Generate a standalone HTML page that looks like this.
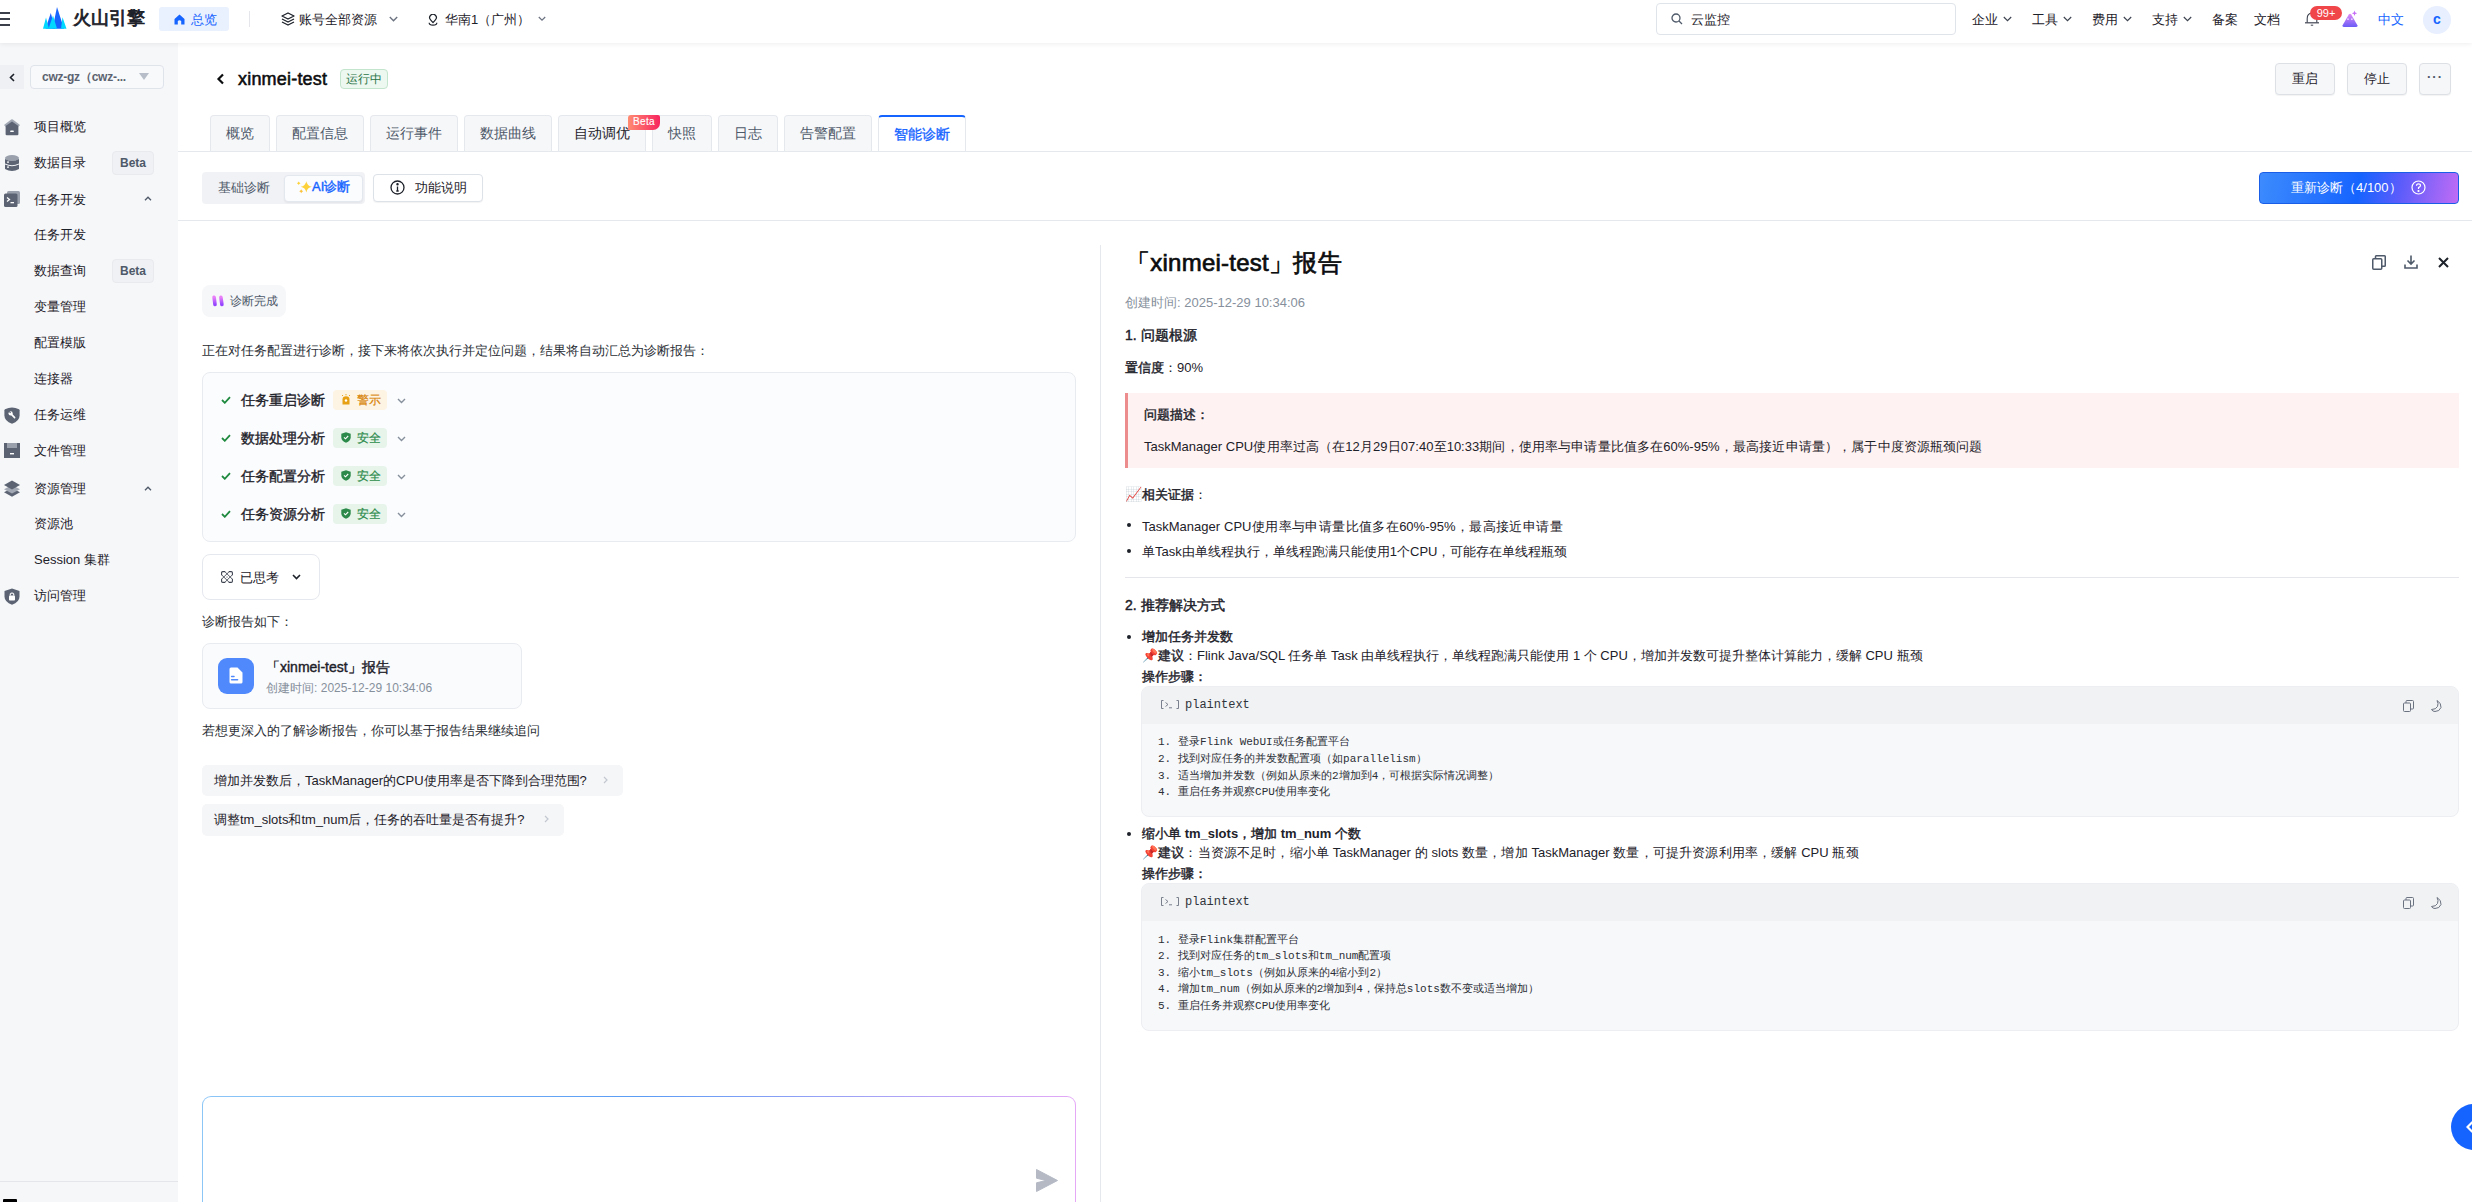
<!DOCTYPE html>
<html><head><meta charset="utf-8">
<style>
*{box-sizing:border-box;margin:0;padding:0}
html,body{width:2472px;height:1202px;overflow:hidden;background:#fff}
body{position:relative;font-family:"Liberation Sans",sans-serif;font-size:13px;color:#1d2129}
.a{position:absolute;white-space:nowrap}
svg{display:block}
/* top nav */
#nav{left:0;top:0;width:2472px;height:43px;background:#fff;box-shadow:0 1px 5px rgba(0,0,0,.07);z-index:5}
.nt{font-size:13px;line-height:20px;color:#1d2129;top:10px}
/* sidebar */
#side{left:0;top:43px;width:178px;height:1159px;background:#f6f7f9}
.si{font-size:13px;line-height:20px;color:#1d2129;left:34px;margin-top:1px}
.beta{background:#f0f1f4;border:1px solid #e8eaee;border-radius:4px;color:#4e5969;font-size:12px;font-weight:bold;text-align:center;line-height:22px;height:24px;width:42px;left:112px}
/* tabs */
.tab{top:115px;height:36px;background:#f6f7f9;border:1px solid #e5e8ed;border-bottom:none;border-radius:4px 4px 0 0;font-size:14px;line-height:35px;color:#4e5969;text-align:center}
.btn{background:#f6f7f9;border:1px solid #dde1e6;border-radius:4px;box-shadow:0 1px 1px rgba(0,0,0,.05);font-size:13px;text-align:center;color:#1d2129}
</style></head><body>

<!-- ========== TOP NAV ========== -->
<div id="nav" class="a">
  <!-- hamburger -->
  <div class="a" style="left:0;top:12px;width:10px;height:2px;background:#3a3f4a"></div>
  <div class="a" style="left:0;top:18px;width:10px;height:2px;background:#3a3f4a"></div>
  <div class="a" style="left:0;top:24px;width:10px;height:2px;background:#3a3f4a"></div>
  <!-- logo -->
  <svg class="a" style="left:43px;top:7px" width="24" height="22" viewBox="0 0 24 22">
    <polygon points="9.5,21.7 14,0 21,21.7" fill="#1664ff"/>
    <polygon points="2.5,21.7 7.8,6 12,21.7" fill="#1664ff"/>
    <polygon points="0,21.7 3,10.5 6,21.7" fill="#00d8ff"/>
    <polygon points="5.5,21.7 10,8.5 14,21.7" fill="#00d8ff"/>
    <polygon points="18,21.7 19.5,10.3 23.5,21.7" fill="#00d8ff"/>
  </svg>
  <div class="a" style="left:73px;top:6px;font-size:17.5px;line-height:24px;font-weight:normal;-webkit-text-stroke-width:0.85px;color:#1d2129;width:72.0px;text-align:justify;text-align-last:justify">火山引擎</div>
  <!-- 总览 pill -->
  <div class="a" style="left:159px;top:7px;width:70px;height:24px;background:#eaf1fe;border-radius:3px"></div>
  <svg class="a" style="left:174px;top:14px" width="11" height="11" viewBox="0 0 11 11"><path d="M0.5 5 L5.5 0.5 L10.5 5 L10.5 10.5 L7.2 10.5 L7.2 7 Q5.5 5.5 3.8 7 L3.8 10.5 L0.5 10.5 Z" fill="#1664ff"/></svg>
  <div class="a nt" style="left:191px;color:#1664ff;width:26.1px;text-align:justify;text-align-last:justify">总览</div>
  <div class="a" style="left:249px;top:11px;width:1px;height:16px;background:#e5e6eb"></div>
  <!-- account resource -->
  <svg class="a" style="left:281px;top:12px" width="14" height="14" viewBox="0 0 14 14" fill="none" stroke="#1d2129" stroke-width="1.3" stroke-linejoin="round"><path d="M7 1 L13 4 L7 7 L1 4 Z"/><path d="M1 7 L7 10 L13 7"/><path d="M1 10 L7 13 L13 10"/></svg>
  <div class="a nt" style="left:299px;width:78.0px;text-align:justify;text-align-last:justify">账号全部资源</div>
  <svg class="a" style="left:389px;top:16px" width="9" height="6" viewBox="0 0 9 6"><path d="M0.8 1 L4.5 4.7 L8.2 1" fill="none" stroke="#6b7280" stroke-width="1.4"/></svg>
  <svg class="a" style="left:428px;top:14px" width="10" height="12" viewBox="0 0 10 12" fill="none" stroke="#1d2129" stroke-width="1.2" stroke-linejoin="round"><path d="M5 8.6 L2.6 5.9 A3.3 3.3 0 1 1 7.4 5.9 Z"/><path d="M1.2 8.8 Q1 11.2 5 11.2 Q9 11.2 8.8 8.8"/></svg>
  <div class="a nt" style="left:445px;width:85.3px;text-align:justify;text-align-last:justify">华南1（广州）</div>
  <svg class="a" style="left:538px;top:16px" width="8" height="6" viewBox="0 0 8 6"><path d="M0.8 1 L4 4.2 L7.2 1" fill="none" stroke="#6b7280" stroke-width="1.2"/></svg>

  <!-- search -->
  <div class="a" style="left:1656px;top:3px;width:300px;height:32px;border:1px solid #dfe3ea;border-radius:4px;background:#fff"></div>
  <svg class="a" style="left:1671px;top:13px" width="12" height="12" viewBox="0 0 12 12" fill="none" stroke="#4e5969" stroke-width="1.3"><circle cx="5" cy="5" r="4"/><path d="M8 8 L11 11"/></svg>
  <div class="a nt" style="left:1691px;width:39.0px;text-align:justify;text-align-last:justify">云监控</div>
  <div class="a nt" style="left:1972px;width:26.1px;text-align:justify;text-align-last:justify">企业</div>
  <svg class="a" style="left:2003px;top:16px" width="9" height="6" viewBox="0 0 9 6"><path d="M0.8 1 L4.5 4.7 L8.2 1" fill="none" stroke="#3d4350" stroke-width="1.15"/></svg>
  <div class="a nt" style="left:2032px;width:26.1px;text-align:justify;text-align-last:justify">工具</div>
  <svg class="a" style="left:2063px;top:16px" width="9" height="6" viewBox="0 0 9 6"><path d="M0.8 1 L4.5 4.7 L8.2 1" fill="none" stroke="#3d4350" stroke-width="1.15"/></svg>
  <div class="a nt" style="left:2092px;width:26.1px;text-align:justify;text-align-last:justify">费用</div>
  <svg class="a" style="left:2123px;top:16px" width="9" height="6" viewBox="0 0 9 6"><path d="M0.8 1 L4.5 4.7 L8.2 1" fill="none" stroke="#3d4350" stroke-width="1.15"/></svg>
  <div class="a nt" style="left:2152px;width:26.1px;text-align:justify;text-align-last:justify">支持</div>
  <svg class="a" style="left:2183px;top:16px" width="9" height="6" viewBox="0 0 9 6"><path d="M0.8 1 L4.5 4.7 L8.2 1" fill="none" stroke="#3d4350" stroke-width="1.15"/></svg>
  <div class="a nt" style="left:2212px;width:26.1px;text-align:justify;text-align-last:justify">备案</div>
  <div class="a nt" style="left:2254px;width:26.1px;text-align:justify;text-align-last:justify">文档</div>
  <!-- bell -->
  <svg class="a" style="left:2304px;top:12px" width="16" height="15" viewBox="0 0 16 15" fill="none" stroke="#3d4350" stroke-width="1.1"><path d="M3.2 10.5 L3.2 6.5 Q3.2 1.3 8 1.3 Q12.8 1.3 12.8 6.5 L12.8 10.5"/><path d="M1 10.8 L15 10.8" stroke-width="1.2"/><path d="M6.8 13.2 L9.2 13.2" stroke-width="1"/></svg>
  <div class="a" style="left:2310px;top:6px;width:32px;height:14px;border-radius:7px;background:#f0464a;color:#fff;font-size:11px;line-height:14px;text-align:center">99+</div>
  <svg class="a" style="left:2341px;top:10px" width="18" height="18" viewBox="0 0 18 18"><defs><linearGradient id="pm" x1="0" y1="0" x2="0" y2="1"><stop offset="0" stop-color="#e08af8"/><stop offset="1" stop-color="#6a5cf6"/></linearGradient></defs><path d="M1.6 15.2 L7.8 4.6 Q9 2.8 10.2 4.6 L16.4 15.2 Q17 17 15.2 17 L2.8 17 Q1 17 1.6 15.2 Z" fill="url(#pm)"/><rect x="6.3" y="8.3" width="1.4" height="1.8" rx="0.6" fill="#fff" opacity="0.85"/><rect x="10.2" y="8.3" width="1.4" height="1.8" rx="0.6" fill="#fff" opacity="0.85"/><path d="M13.5 0.5 L14.2 2.5 L16.2 3.2 L14.2 3.9 L13.5 5.9 L12.8 3.9 L10.8 3.2 L12.8 2.5 Z" fill="#c46cf5"/></svg>
  <div class="a nt" style="left:2378px;color:#1664ff;width:26.1px;text-align:justify;text-align-last:justify">中文</div>
  <div class="a" style="left:2423px;top:6px;width:28px;height:28px;border-radius:50%;background:#e8effe;color:#1664ff;font-weight:bold;font-size:14px;line-height:27px;text-align:center">c</div>
</div>

<!-- ========== SIDEBAR ========== -->
<div id="side" class="a">
  <div class="a" style="left:0;top:22px;width:24px;height:24px;background:#eef0f3"></div>
  <svg class="a" style="left:9px;top:30px" width="6" height="9" viewBox="0 0 6 9"><path d="M5 1 L1.5 4.5 L5 8" fill="none" stroke="#1d2129" stroke-width="1.6"/></svg>
  <div class="a" style="left:30px;top:22px;width:134px;height:24px;border:1px solid #dfe3ea;border-radius:4px;background:#f8f9fb"></div>
  <div class="a" style="left:42px;top:24px;font-size:12px;line-height:20px;font-weight:bold;color:#5c6370;letter-spacing:-0.25px;width:83.9px;text-align:justify;text-align-last:justify">cwz-gz（cwz-...</div>
  <svg class="a" style="left:139px;top:30px" width="10" height="8" viewBox="0 0 10 8"><path d="M0 0 L10 0 L5 7 Z" fill="#b8bec9"/></svg>

  <!-- icons -->
  <svg class="a" style="left:4px;top:76px" width="16" height="17" viewBox="0 0 16 17"><path d="M0.3 6.6 Q0 6 0.6 5.5 L7.2 0.6 Q8 0 8.8 0.6 L15.4 5.5 Q16 6 15.7 6.6 L14.5 7.6 L1.5 7.6 Z" fill="#a3a9b4"/><path d="M1.6 7 L8 2.6 L14.4 7 L14.4 15.2 Q14.4 16.3 13.3 16.3 L2.7 16.3 Q1.6 16.3 1.6 15.2 Z" fill="#5c6474"/><rect x="6.2" y="11.6" width="3.6" height="1.4" rx="0.6" fill="#fff"/></svg>
  <div class="a si" style="top:73px;width:52.0px;text-align:justify;text-align-last:justify">项目概览</div>
  <svg class="a" style="left:5px;top:112px" width="14" height="17" viewBox="0 0 14 17"><ellipse cx="7" cy="3" rx="7" ry="3" fill="#9aa1ad"/><path d="M0 4 Q7 8 14 4 L14 8.5 Q7 12 0 8.5 Z" fill="#5c6474"/><path d="M0 9.5 Q7 13 14 9.5 L14 14 Q7 18 0 14 Z" fill="#5c6474"/><rect x="2" y="6.5" width="2" height="1.2" fill="#fff"/><rect x="2" y="11.5" width="2" height="1.2" fill="#fff"/></svg>
  <div class="a si" style="top:109px;width:52.0px;text-align:justify;text-align-last:justify">数据目录</div>
  <div class="a beta" style="top:108px">Beta</div>
  <svg class="a" style="left:4px;top:148px" width="16" height="16" viewBox="0 0 16 16"><rect x="3" y="0" width="13" height="13" rx="1.5" fill="#9aa1ad"/><rect x="0" y="2.5" width="13.5" height="13.5" rx="1.5" fill="#5c6474"/><path d="M3 6.5 L5.5 8.5 L3 10.5" fill="none" stroke="#fff" stroke-width="1.3"/><rect x="6.5" y="11" width="3.5" height="1.3" fill="#fff"/></svg>
  <div class="a si" style="top:146px;width:52.0px;text-align:justify;text-align-last:justify">任务开发</div>
  <svg class="a" style="left:144px;top:153px" width="8" height="5" viewBox="0 0 8 5"><path d="M1 4.2 L4 1.2 L7 4.2" fill="none" stroke="#4e5969" stroke-width="1.3"/></svg>
  <div class="a si" style="top:181px;width:52.0px;text-align:justify;text-align-last:justify">任务开发</div>
  <div class="a si" style="top:217px;width:52.0px;text-align:justify;text-align-last:justify">数据查询</div>
  <div class="a beta" style="top:216px">Beta</div>
  <div class="a si" style="top:253px;width:52.0px;text-align:justify;text-align-last:justify">变量管理</div>
  <div class="a si" style="top:289px;width:52.0px;text-align:justify;text-align-last:justify">配置模版</div>
  <div class="a si" style="top:325px;width:39.0px;text-align:justify;text-align-last:justify">连接器</div>
  <svg class="a" style="left:4px;top:364px" width="16" height="17" viewBox="0 0 16 17"><path d="M8 0.5 Q11.5 0.8 15 2.3 Q15.6 2.6 15.6 3.3 L15.6 8.5 Q15.6 14 8 16.8 Q0.4 14 0.4 8.5 L0.4 3.3 Q0.4 2.6 1 2.3 Q4.5 0.8 8 0.5 Z" fill="#5c6474"/><circle cx="6.6" cy="6.4" r="2.1" fill="#fff"/><path d="M6.8 6.6 L10.6 10.6" stroke="#fff" stroke-width="1.6" stroke-linecap="round"/><path d="M5.2 4.3 L6.6 5.8" stroke="#5c6474" stroke-width="1.2"/></svg>
  <div class="a si" style="top:361px;width:52.0px;text-align:justify;text-align-last:justify">任务运维</div>
  <svg class="a" style="left:4px;top:400px" width="16" height="15" viewBox="0 0 16 15"><path d="M0 0 L16 0 L16 15 L0 15 Z" fill="#5c6474"/><rect x="3" y="0" width="10" height="5" fill="#9aa1ad"/><rect x="6" y="10" width="4" height="1.4" fill="#fff"/></svg>
  <div class="a si" style="top:397px;width:52.0px;text-align:justify;text-align-last:justify">文件管理</div>
  <svg class="a" style="left:4px;top:437px" width="16" height="17" viewBox="0 0 16 17"><path d="M0 12.3 L8 8 L16 12.3 L8 16.8 Z" fill="#5c6474"/><path d="M0 9.3 L8 5 L16 9.3 L8 13.6 Z" fill="#a3a9b4"/><path d="M0 5 L8 0.5 L16 5 L8 9.5 Z" fill="#5c6474"/></svg>
  <div class="a si" style="top:435px;width:52.0px;text-align:justify;text-align-last:justify">资源管理</div>
  <svg class="a" style="left:144px;top:443px" width="8" height="5" viewBox="0 0 8 5"><path d="M1 4.2 L4 1.2 L7 4.2" fill="none" stroke="#4e5969" stroke-width="1.3"/></svg>
  <div class="a si" style="top:470px;width:39.0px;text-align:justify;text-align-last:justify">资源池</div>
  <div class="a si" style="top:506px;width:75.9px;text-align:justify;text-align-last:justify">Session 集群</div>
  <svg class="a" style="left:4px;top:545px" width="16" height="17" viewBox="0 0 16 17"><path d="M8 0.5 L15.5 3 L15.5 8.5 Q15.5 14 8 16.8 Q0.5 14 0.5 8.5 L0.5 3 Z" fill="#5c6474"/><rect x="5" y="7.5" width="6" height="5" rx="0.8" fill="#fff"/><path d="M6.3 7.5 L6.3 6 Q8 4 9.7 6 L9.7 7.5" fill="none" stroke="#fff" stroke-width="1.1"/></svg>
  <div class="a si" style="top:542px;width:52.0px;text-align:justify;text-align-last:justify">访问管理</div>
  <div class="a" style="left:0;top:1138px;width:178px;height:1px;background:#e5e6eb"></div>
  <div class="a" style="left:3px;top:1156px;width:14px;height:6px;background:#000;border-radius:1px"></div>
</div>

<!-- ========== MAIN ========== -->
<div id="main">
  <!-- header -->
  <svg class="a" style="left:216px;top:73px" width="9" height="12" viewBox="0 0 9 12"><path d="M7 1.5 L2.5 6 L7 10.5" fill="none" stroke="#0c0d0e" stroke-width="2.2"/></svg>
  <div class="a" style="left:238px;top:68px;font-size:18px;line-height:22px;font-weight:normal;-webkit-text-stroke-width:0.55px;letter-spacing:0.2px;color:#0c0d0e;width:89.3px;text-align:justify;text-align-last:justify">xinmei-test</div>
  <div class="a" style="left:340px;top:69px;width:48px;height:20px;background:#edf8f0;border:1px solid #c3e5cd;border-radius:4px;color:#2a7447;font-size:12px;line-height:18px;text-align:center;padding-left:4.95px;padding-right:4.95px;text-align:justify;text-align-last:justify">运行中</div>
  <div class="a btn" style="left:2275px;top:63px;width:60px;height:32px;line-height:30px;padding-left:15.95px;padding-right:15.95px;text-align:justify;text-align-last:justify">重启</div>
  <div class="a btn" style="left:2347px;top:63px;width:60px;height:32px;line-height:30px;padding-left:15.95px;padding-right:15.95px;text-align:justify;text-align-last:justify">停止</div>
  <div class="a btn" style="left:2419px;top:63px;width:32px;height:32px;line-height:26px;letter-spacing:1px;font-weight:bold;color:#4e5969">···</div>

  <!-- tabs -->
  <div class="a" style="left:178px;top:151px;width:2294px;height:1px;background:#e5e8ed"></div>
  <div class="a tab" style="left:210px;width:60px;padding-left:14.95px;padding-right:14.95px;text-align:justify;text-align-last:justify">概览</div>
  <div class="a tab" style="left:276px;width:88px;padding-left:14.95px;padding-right:14.95px;text-align:justify;text-align-last:justify">配置信息</div>
  <div class="a tab" style="left:370px;width:88px;padding-left:14.95px;padding-right:14.95px;text-align:justify;text-align-last:justify">运行事件</div>
  <div class="a tab" style="left:464px;width:88px;padding-left:14.95px;padding-right:14.95px;text-align:justify;text-align-last:justify">数据曲线</div>
  <div class="a tab" style="left:558px;width:88px;color:#1d2129;padding-left:14.95px;padding-right:14.95px;text-align:justify;text-align-last:justify">自动调优</div>
  <div class="a" style="z-index:2;left:628px;top:115px;width:32px;height:15px;border-radius:3px 2px 7px 0;background:linear-gradient(90deg,#ff8c72,#f7245e);color:#fff;font-size:10px;line-height:14px;letter-spacing:0.4px;text-align:center;-webkit-text-stroke-width:0.15px">Beta</div>
  <div class="a tab" style="left:652px;width:60px;padding-left:14.95px;padding-right:14.95px;text-align:justify;text-align-last:justify">快照</div>
  <div class="a tab" style="left:718px;width:60px;padding-left:14.95px;padding-right:14.95px;text-align:justify;text-align-last:justify">日志</div>
  <div class="a tab" style="left:784px;width:88px;padding-left:14.95px;padding-right:14.95px;text-align:justify;text-align-last:justify">告警配置</div>
  <div class="a tab" style="left:878px;width:88px;background:#fff;border-color:#e5e8ed;color:#1664ff;border-top:2px solid #1664ff;line-height:34px;height:36px;-webkit-text-stroke-width:0.3px;padding-left:14.95px;padding-right:14.95px;text-align:justify;text-align-last:justify">智能诊断</div>

  <!-- toolbar -->
  <div class="a" style="left:202px;top:172px;width:163px;height:32px;background:#f1f2f5;border-radius:4px"></div>
  <div class="a" style="left:218px;top:178px;font-size:13px;line-height:20px;color:#4e5969;width:52.0px;text-align:justify;text-align-last:justify">基础诊断</div>
  <div class="a" style="left:284px;top:175px;width:79px;height:27px;background:#fbfcfe;border:1px solid #e3e7ee;border-radius:4px;box-shadow:0 1px 2px rgba(0,0,0,.06)"></div>
  <svg class="a" style="left:295px;top:179px" width="18" height="16" viewBox="0 0 18 16"><path d="M11.3 2.2 Q12.200000000000001 6.8999999999999995 16.9 7.8 Q12.200000000000001 8.7 11.3 13.399999999999999 Q10.4 8.7 5.700000000000001 7.8 Q10.4 6.8999999999999995 11.3 2.2Z" fill="#fcd13a"/><path d="M3.7 2.5 Q4.15 3.8499999999999996 5.5 4.3 Q4.15 4.75 3.7 6.1 Q3.25 4.75 1.9000000000000001 4.3 Q3.25 3.8499999999999996 3.7 2.5Z" fill="#fcd13a"/><path d="M6.2 10.3 Q6.7 11.8 8.2 12.3 Q6.7 12.8 6.2 14.3 Q5.7 12.8 4.2 12.3 Q5.7 11.8 6.2 10.3Z" fill="#fcc23a"/></svg>
  <div class="a" style="left:312px;top:177px;font-size:13px;line-height:20px;color:#1664ff;font-weight:normal;-webkit-text-stroke-width:0.4px;width:38.3px;text-align:justify;text-align-last:justify">AI诊断</div>
  <div class="a" style="left:373px;top:174px;width:110px;height:28px;background:#fff;border:1px solid #dde2e9;border-radius:4px;box-shadow:0 1px 1px rgba(0,0,0,.05)"></div>
  <svg class="a" style="left:390px;top:180px" width="15" height="15" viewBox="0 0 15 15" fill="none" stroke="#1d2129" stroke-width="1.3"><circle cx="7.5" cy="7.5" r="6.5"/><path d="M7.5 6.5 L7.5 11 M6.3 11 L8.7 11"/><circle cx="7.5" cy="4.2" r="0.6" fill="#1d2129"/></svg>
  <div class="a" style="left:415px;top:178px;font-size:13px;line-height:20px;color:#1d2129;width:52.0px;text-align:justify;text-align-last:justify">功能说明</div>

  <div class="a" style="left:2259px;top:172px;width:200px;height:32px;border-radius:4px;background:linear-gradient(100deg,#3d8bfd 0%,#1664ff 50%,#5a5cfb 70%,#c06cf5 100%);border:1px solid #1a5ee8"></div>
  <div class="a" style="left:2291px;top:178px;font-size:13px;line-height:20px;color:#fff;width:110.6px;text-align:justify;text-align-last:justify">重新诊断（4/100）</div>
  <svg class="a" style="left:2411px;top:180px" width="15" height="15" viewBox="0 0 15 15" fill="none" stroke="#fff" stroke-width="1.2"><circle cx="7.5" cy="7.5" r="6.5"/><path d="M5.5 5.8 Q5.5 3.8 7.5 3.8 Q9.5 3.8 9.5 5.6 Q9.5 6.8 7.5 7.6 L7.5 9"/><circle cx="7.5" cy="11" r="0.5" fill="#fff"/></svg>
  <div class="a" style="left:178px;top:220px;width:2294px;height:1px;background:#e5e8ed"></div>
</div>

<!-- ========== CHAT ========== -->
<div id="chat">
  <div class="a" style="left:1100px;top:245px;width:1px;height:957px;background:#e5e8ed"></div>
  <div class="a" style="left:202px;top:285px;width:84px;height:32px;border-radius:8px;background:#f6f7f9"></div>
  <svg class="a" style="left:210px;top:294px" width="14" height="14" viewBox="0 0 14 14"><defs><linearGradient id="pg" x1="0" y1="0" x2="0" y2="1"><stop offset="0" stop-color="#ea80f8"/><stop offset="1" stop-color="#9446ff"/></linearGradient></defs><path d="M4.1 3.3 L5 10.4" stroke="url(#pg)" stroke-width="3.6" stroke-linecap="round"/><path d="M10.9 3.3 L11.9 10.4" stroke="url(#pg)" stroke-width="3.6" stroke-linecap="round"/></svg>
  <div class="a" style="left:230px;top:291px;font-size:12px;line-height:20px;color:#4e5969;width:48.0px;text-align:justify;text-align-last:justify">诊断完成</div>
  <div class="a" style="left:202px;top:341px;font-size:13px;line-height:20px;color:#2b2f36;width:507.1px;text-align:justify;text-align-last:justify">正在对任务配置进行诊断，接下来将依次执行并定位问题，结果将自动汇总为诊断报告：</div>
  <div class="a" style="left:202px;top:372px;width:874px;height:170px;border:1px solid #e8ebf0;border-radius:8px;background:#fbfcfe"></div>
  <svg class="a" style="left:221px;top:396px" width="10" height="8" viewBox="0 0 10 8"><path d="M1 4 L3.8 6.8 L9 1.2" fill="none" stroke="#1f8a3f" stroke-width="1.8"/></svg>
  <div class="a" style="left:241px;top:390px;font-size:14px;line-height:20px;font-weight:normal;-webkit-text-stroke:0.35px #1d2129;color:#1d2129;width:84.0px;text-align:justify;text-align-last:justify">任务重启诊断</div>
  <div class="a" style="left:333px;top:390px;width:54px;height:20px;border-radius:4px;background:#fdf4e4"></div>
  <svg class="a" style="left:341px;top:394px" width="10" height="11" viewBox="0 0 10 11"><path d="M1.5 10.5 L1.5 5.5 Q1.5 2.3 5 2.3 Q8.5 2.3 8.5 5.5 L8.5 10.5 Z" fill="#e8a013"/><path d="M5 0 L5 1.3 M1 1 L2 2 M9 1 L8 2" stroke="#e8a013" stroke-width="0.9"/><circle cx="5" cy="6.5" r="1.2" fill="#fff"/></svg>
  <div class="a" style="-webkit-text-stroke-width:0.2px;left:357px;top:390px;font-size:12px;line-height:20px;color:#d9860b;width:24.1px;text-align:justify;text-align-last:justify">警示</div>
  <svg class="a" style="left:397px;top:398px" width="9" height="6" viewBox="0 0 9 6"><path d="M1 1 L4.5 4.5 L8 1" fill="none" stroke="#86909c" stroke-width="1.4"/></svg>
  <svg class="a" style="left:221px;top:434px" width="10" height="8" viewBox="0 0 10 8"><path d="M1 4 L3.8 6.8 L9 1.2" fill="none" stroke="#1f8a3f" stroke-width="1.8"/></svg>
  <div class="a" style="left:241px;top:428px;font-size:14px;line-height:20px;font-weight:normal;-webkit-text-stroke:0.35px #1d2129;color:#1d2129;width:84.0px;text-align:justify;text-align-last:justify">数据处理分析</div>
  <div class="a" style="left:333px;top:428px;width:54px;height:20px;border-radius:4px;background:#e6f4ea"></div>
  <svg class="a" style="left:341px;top:432px" width="10" height="11" viewBox="0 0 10 11"><path d="M5 0.3 L9.7 1.8 L9.7 5.3 Q9.7 9 5 10.8 Q0.3 9 0.3 5.3 L0.3 1.8 Z" fill="#2b8a4a"/><path d="M3 5.3 L4.5 6.8 L7.2 4" fill="none" stroke="#fff" stroke-width="1.1"/></svg>
  <div class="a" style="-webkit-text-stroke-width:0.2px;left:357px;top:428px;font-size:12px;line-height:20px;color:#2b8a4a;width:24.1px;text-align:justify;text-align-last:justify">安全</div>
  <svg class="a" style="left:397px;top:436px" width="9" height="6" viewBox="0 0 9 6"><path d="M1 1 L4.5 4.5 L8 1" fill="none" stroke="#86909c" stroke-width="1.4"/></svg>
  <svg class="a" style="left:221px;top:472px" width="10" height="8" viewBox="0 0 10 8"><path d="M1 4 L3.8 6.8 L9 1.2" fill="none" stroke="#1f8a3f" stroke-width="1.8"/></svg>
  <div class="a" style="left:241px;top:466px;font-size:14px;line-height:20px;font-weight:normal;-webkit-text-stroke:0.35px #1d2129;color:#1d2129;width:84.0px;text-align:justify;text-align-last:justify">任务配置分析</div>
  <div class="a" style="left:333px;top:466px;width:54px;height:20px;border-radius:4px;background:#e6f4ea"></div>
  <svg class="a" style="left:341px;top:470px" width="10" height="11" viewBox="0 0 10 11"><path d="M5 0.3 L9.7 1.8 L9.7 5.3 Q9.7 9 5 10.8 Q0.3 9 0.3 5.3 L0.3 1.8 Z" fill="#2b8a4a"/><path d="M3 5.3 L4.5 6.8 L7.2 4" fill="none" stroke="#fff" stroke-width="1.1"/></svg>
  <div class="a" style="-webkit-text-stroke-width:0.2px;left:357px;top:466px;font-size:12px;line-height:20px;color:#2b8a4a;width:24.1px;text-align:justify;text-align-last:justify">安全</div>
  <svg class="a" style="left:397px;top:474px" width="9" height="6" viewBox="0 0 9 6"><path d="M1 1 L4.5 4.5 L8 1" fill="none" stroke="#86909c" stroke-width="1.4"/></svg>
  <svg class="a" style="left:221px;top:510px" width="10" height="8" viewBox="0 0 10 8"><path d="M1 4 L3.8 6.8 L9 1.2" fill="none" stroke="#1f8a3f" stroke-width="1.8"/></svg>
  <div class="a" style="left:241px;top:504px;font-size:14px;line-height:20px;font-weight:normal;-webkit-text-stroke:0.35px #1d2129;color:#1d2129;width:84.0px;text-align:justify;text-align-last:justify">任务资源分析</div>
  <div class="a" style="left:333px;top:504px;width:54px;height:20px;border-radius:4px;background:#e6f4ea"></div>
  <svg class="a" style="left:341px;top:508px" width="10" height="11" viewBox="0 0 10 11"><path d="M5 0.3 L9.7 1.8 L9.7 5.3 Q9.7 9 5 10.8 Q0.3 9 0.3 5.3 L0.3 1.8 Z" fill="#2b8a4a"/><path d="M3 5.3 L4.5 6.8 L7.2 4" fill="none" stroke="#fff" stroke-width="1.1"/></svg>
  <div class="a" style="-webkit-text-stroke-width:0.2px;left:357px;top:504px;font-size:12px;line-height:20px;color:#2b8a4a;width:24.1px;text-align:justify;text-align-last:justify">安全</div>
  <svg class="a" style="left:397px;top:512px" width="9" height="6" viewBox="0 0 9 6"><path d="M1 1 L4.5 4.5 L8 1" fill="none" stroke="#86909c" stroke-width="1.4"/></svg>
  <div class="a" style="left:202px;top:554px;width:118px;height:46px;border:1px solid #e5e8ee;border-radius:8px;background:#fff"></div>
  <svg class="a" style="left:221px;top:571px" width="12" height="12" viewBox="0 0 12 12" fill="none" stroke="#3d4350" stroke-width="1.1" stroke-linecap="round"><path d="M0.6 3.8 L0.6 1.8 Q0.6 0.6 1.8 0.6 L3.8 0.6 M8.2 0.6 L10.2 0.6 Q11.4 0.6 11.4 1.8 L11.4 3.8 M11.4 8.2 L11.4 10.2 Q11.4 11.4 10.2 11.4 L8.2 11.4 M3.8 11.4 L1.8 11.4 Q0.6 11.4 0.6 10.2 L0.6 8.2"/><path d="M3.8 0.6 L11.4 8.2 M0.6 3.8 L8.2 11.4 M8.2 0.6 L0.6 8.2 M11.4 3.8 L3.8 11.4" stroke-width="0.9"/><circle cx="6" cy="6" r="0.6" fill="#3d4350" stroke="none"/></svg>
  <div class="a" style="left:240px;top:568px;font-size:13px;line-height:20px;color:#1d2129;width:39.0px;text-align:justify;text-align-last:justify">已思考</div>
  <svg class="a" style="left:292px;top:574px" width="9" height="6" viewBox="0 0 9 6"><path d="M1 1 L4.5 4.5 L8 1" fill="none" stroke="#1d2129" stroke-width="1.6"/></svg>
  <div class="a" style="left:202px;top:612px;font-size:13px;line-height:20px;color:#2b2f36;width:91.0px;text-align:justify;text-align-last:justify">诊断报告如下：</div>
  <div class="a" style="left:202px;top:643px;width:320px;height:66px;border:1px solid #e8ebf0;border-radius:8px;background:#fafbfd"></div>
  <div class="a" style="left:218px;top:658px;width:36px;height:36px;border-radius:9px;background:#5089fb"></div>
  <svg class="a" style="left:229px;top:667px" width="14" height="17" viewBox="0 0 14 17"><path d="M1.5 0.5 L8.5 0.5 L13.5 5.5 L13.5 15 Q13.5 16.5 12 16.5 L2 16.5 Q0.5 16.5 0.5 15 L0.5 2 Q0.5 0.5 2 0.5 Z" fill="#fff"/><path d="M2.6 9.6 L5 9.6 M2.6 12.8 L8.6 12.8" stroke="#5089fb" stroke-width="1.5" stroke-linecap="round"/></svg>
  <div class="a" style="left:266px;top:657px;font-size:14px;line-height:20px;font-weight:normal;-webkit-text-stroke-width:0.4px;color:#1d2129;width:123.7px;text-align:justify;text-align-last:justify">「xinmei-test」报告</div>
  <div class="a" style="left:266px;top:678px;font-size:12px;line-height:20px;color:#86909c;width:166.2px;text-align:justify;text-align-last:justify">创建时间: 2025-12-29 10:34:06</div>
  <div class="a" style="left:202px;top:721px;font-size:13px;line-height:20px;color:#2b2f36;width:338.1px;text-align:justify;text-align-last:justify">若想更深入的了解诊断报告，你可以基于报告结果继续追问</div>
  <div class="a" style="left:202px;top:765px;width:421px;height:31px;border-radius:5px;background:#f5f6f8"></div>
  <div class="a" style="left:214px;top:771px;font-size:13px;line-height:20px;color:#1d2129;width:372.8px;text-align:justify;text-align-last:justify">增加并发数后，TaskManager的CPU使用率是否下降到合理范围?</div>
  <svg class="a" style="left:603px;top:776px" width="5" height="8" viewBox="0 0 5 8"><path d="M1 1 L4 4 L1 7" fill="none" stroke="#c2c7d0" stroke-width="1.2"/></svg>
  <div class="a" style="left:202px;top:804px;width:362px;height:32px;border-radius:5px;background:#f5f6f8"></div>
  <div class="a" style="left:214px;top:810px;font-size:13px;line-height:20px;color:#1d2129;width:310.6px;text-align:justify;text-align-last:justify">调整tm_slots和tm_num后，任务的吞吐量是否有提升?</div>
  <svg class="a" style="left:544px;top:815px" width="5" height="8" viewBox="0 0 5 8"><path d="M1 1 L4 4 L1 7" fill="none" stroke="#c2c7d0" stroke-width="1.2"/></svg>
  <!-- input -->
  <div class="a" style="left:202px;top:1096px;width:874px;height:120px;border-radius:9px;background:linear-gradient(90deg,#8cc6f7,#5b9cf5 50%,#e4a8f7)"></div>
  <div class="a" style="left:203px;top:1097px;width:872px;height:118px;border-radius:8px;background:#fff"></div>
  <svg class="a" style="left:1036px;top:1169px" width="22" height="23" viewBox="0 0 22 23"><path d="M0.5 0.5 L21.5 11.5 L0.5 22.5 L0.5 13.8 L10 11.5 L0.5 9.2 Z" fill="#b4b9c4" stroke="#b4b9c4" stroke-width="1" stroke-linejoin="round"/></svg>
</div>
<!-- ========== REPORT ========== -->
<div id="report">
<div class="a" style="left:1126px;top:248px;font-size:24px;line-height:30px;font-weight:normal;-webkit-text-stroke-width:0.7px;letter-spacing:0.25px;color:#0c0d0e;width:215.8px;text-align:justify;text-align-last:justify">「xinmei-test」报告</div>
<svg class="a" style="left:2372px;top:255px" width="14" height="15" viewBox="0 0 14 15" fill="none" stroke="#4e5969" stroke-width="1.5"><rect x="0.75" y="3.75" width="9" height="10.5" rx="1"/><path d="M3.5 3.75 L3.5 1.5 Q3.5 0.75 4.25 0.75 L12.5 0.75 Q13.25 0.75 13.25 1.5 L13.25 10.5 Q13.25 11.25 12.5 11.25 L9.75 11.25"/></svg>
<svg class="a" style="left:2404px;top:255px" width="14" height="14" viewBox="0 0 14 14" fill="none" stroke="#4e5969" stroke-width="1.6"><path d="M7 0.5 L7 8.5 M3.5 5.5 L7 9 L10.5 5.5"/><path d="M1 9.5 L1 13 L13 13 L13 9.5"/></svg>
<svg class="a" style="left:2438px;top:257px" width="11" height="11" viewBox="0 0 11 11" fill="none" stroke="#1d2129" stroke-width="2"><path d="M1 1 L10 10 M10 1 L1 10"/></svg>
<div class="a" style="left:1125px;top:293px;font-size:13px;line-height:20px;color:#86909c;font-weight:normal;width:180.0px;text-align:justify;text-align-last:justify">创建时间: 2025-12-29 10:34:06</div>
<div class="a" style="left:1125px;top:325px;font-size:14px;line-height:20px;color:#1d2129;font-weight:normal;-webkit-text-stroke-width:0.45px;width:71.6px;text-align:justify;text-align-last:justify">1. 问题根源</div>
<div class="a" style="left:1125px;top:358px;font-size:13px;line-height:20px;color:#1d2129;font-weight:normal;width:78.1px;text-align:justify;text-align-last:justify"><span style="-webkit-text-stroke-width:0.4px">置信度</span>：90%</div>
<div class="a" style="left:1125px;top:393px;width:1334px;height:75px;background:#fef3f2;border-left:3px solid #ec8c8c"></div>
<div class="a" style="left:1144px;top:405px;font-size:13px;line-height:20px;color:#1d2129;font-weight:normal;-webkit-text-stroke-width:0.4px;width:65.0px;text-align:justify;text-align-last:justify">问题描述：</div>
<div class="a" style="left:1144px;top:437px;font-size:13px;line-height:20px;color:#1d2129;font-weight:normal;width:838.5px;text-align:justify;text-align-last:justify">TaskManager CPU使用率过高（在12月29日07:40至10:33期间，使用率与申请量比值多在60%-95%，最高接近申请量），属于中度资源瓶颈问题</div>
<div class="a" style="left:1125px;top:483.5px;font-size:13px;line-height:20px;color:#1d2129;font-weight:normal;width:82.0px;text-align:justify;text-align-last:justify"><span style="font-size:14px">📈</span><span style="-webkit-text-stroke-width:0.4px">相关证据</span>：</div>
<div class="a" style="left:1127px;top:523px;width:4px;height:4px;border-radius:50%;background:#1d2129"></div>
<div class="a" style="left:1142px;top:516.5px;font-size:13px;line-height:20px;color:#1d2129;font-weight:normal;width:420.6px;text-align:justify;text-align-last:justify">TaskManager CPU使用率与申请量比值多在60%-95%，最高接近申请量</div>
<div class="a" style="left:1127px;top:549px;width:4px;height:4px;border-radius:50%;background:#1d2129"></div>
<div class="a" style="left:1142px;top:541.5px;font-size:13px;line-height:20px;color:#1d2129;font-weight:normal;width:425.5px;text-align:justify;text-align-last:justify">单Task由单线程执行，单线程跑满只能使用1个CPU，可能存在单线程瓶颈</div>
<div class="a" style="left:1125px;top:577px;width:1334px;height:1px;background:#e5e6eb"></div>
<div class="a" style="left:1125px;top:594.5px;font-size:14px;line-height:20px;color:#1d2129;font-weight:normal;-webkit-text-stroke-width:0.45px;width:99.6px;text-align:justify;text-align-last:justify">2. 推荐解决方式</div>
<div class="a" style="left:1127px;top:635px;width:4px;height:4px;border-radius:50%;background:#1d2129"></div>
<div class="a" style="left:1142px;top:627px;font-size:13px;line-height:20px;color:#1d2129;font-weight:normal;-webkit-text-stroke-width:0.4px;width:91.0px;text-align:justify;text-align-last:justify">增加任务并发数</div>
<div class="a" style="left:1142px;top:646px;font-size:13px;line-height:20px;color:#1d2129;font-weight:normal;width:780.5px;text-align:justify;text-align-last:justify"><span style="font-size:13px">📌</span><span style="-webkit-text-stroke-width:0.4px">建议</span>：Flink Java/SQL 任务单 Task 由单线程执行，单线程跑满只能使用 1 个 CPU，增加并发数可提升整体计算能力，缓解 CPU 瓶颈</div>
<div class="a" style="left:1142px;top:667px;font-size:13px;line-height:20px;color:#1d2129;font-weight:normal;-webkit-text-stroke-width:0.4px;width:65.0px;text-align:justify;text-align-last:justify">操作步骤：</div>
<div class="a" style="left:1141px;top:686px;width:1318px;height:131px;border:1px solid #eceef2;border-radius:8px;background:#f7f8fa;overflow:hidden"><div style="height:36.5px;background:#f1f2f4"></div></div>
<svg class="a" style="left:1161px;top:700px" width="18" height="9" viewBox="0 0 18 9" fill="none" stroke="#6b7280" stroke-width="0.9"><path d="M2.5 0.5 L0.5 0.5 L0.5 8.5 L2.5 8.5 M15.5 0.5 L17.5 0.5 L17.5 8.5 L15.5 8.5"/><path d="M4.5 2.5 L7 4.5 L4.5 6.5 M8 7.8 L11 7.8"/></svg>
<div class="a" style="left:1185px;top:696px;font-size:12px;line-height:18px;color:#30343b;font-weight:normal;font-family:'Liberation Mono',monospace;width:64.9px;text-align:justify;text-align-last:justify">plaintext</div>
<svg class="a" style="left:2403px;top:700px" width="11" height="12" viewBox="0 0 11 12" fill="none" stroke="#6b7280" stroke-width="1"><rect x="0.5" y="3" width="7" height="8.5" rx="1"/><path d="M3 3 L3 1.5 Q3 0.5 4 0.5 L9.5 0.5 Q10.5 0.5 10.5 1.5 L10.5 8 Q10.5 9 9.5 9 L7.5 9"/></svg>
<svg class="a" style="left:2431px;top:700px" width="11" height="12" viewBox="0 0 11 12" fill="none" stroke="#6b7280" stroke-width="1"><path d="M6 0.5 Q10.5 3 10 7.5 Q8.5 11.5 4 11.5 Q1.5 11.5 0.5 9.5 Q5 9.5 6.5 6.5 Q7.8 3.5 6 0.5 Z"/></svg>
<div class="a" style="left:1158px;top:734.0px;font-size:11px;line-height:16px;color:#2b2f36;font-weight:normal;font-family:'Liberation Mono',monospace;width:13.3px;text-align:justify;text-align-last:justify">1.</div>
<div class="a" style="left:1178px;top:734.0px;font-size:11px;line-height:16px;color:#2b2f36;font-weight:normal;font-family:'Liberation Mono',monospace;width:171.7px;text-align:justify;text-align-last:justify">登录Flink WebUI或任务配置平台</div>
<div class="a" style="left:1158px;top:750.8px;font-size:11px;line-height:16px;color:#2b2f36;font-weight:normal;font-family:'Liberation Mono',monospace;width:13.3px;text-align:justify;text-align-last:justify">2.</div>
<div class="a" style="left:1178px;top:750.8px;font-size:11px;line-height:16px;color:#2b2f36;font-weight:normal;font-family:'Liberation Mono',monospace;width:248.7px;text-align:justify;text-align-last:justify">找到对应任务的并发数配置项（如parallelism）</div>
<div class="a" style="left:1158px;top:767.6px;font-size:11px;line-height:16px;color:#2b2f36;font-weight:normal;font-family:'Liberation Mono',monospace;width:13.3px;text-align:justify;text-align-last:justify">3.</div>
<div class="a" style="left:1178px;top:767.6px;font-size:11px;line-height:16px;color:#2b2f36;font-weight:normal;font-family:'Liberation Mono',monospace;width:321.3px;text-align:justify;text-align-last:justify">适当增加并发数（例如从原来的2增加到4，可根据实际情况调整）</div>
<div class="a" style="left:1158px;top:784.4px;font-size:11px;line-height:16px;color:#2b2f36;font-weight:normal;font-family:'Liberation Mono',monospace;width:13.3px;text-align:justify;text-align-last:justify">4.</div>
<div class="a" style="left:1178px;top:784.4px;font-size:11px;line-height:16px;color:#2b2f36;font-weight:normal;font-family:'Liberation Mono',monospace;width:151.9px;text-align:justify;text-align-last:justify">重启任务并观察CPU使用率变化</div>
<div class="a" style="left:1127px;top:832px;width:4px;height:4px;border-radius:50%;background:#1d2129"></div>
<div class="a" style="left:1142px;top:824px;font-size:13px;line-height:20px;color:#1d2129;font-weight:normal;-webkit-text-stroke-width:0.4px;width:219.0px;text-align:justify;text-align-last:justify">缩小单 <b style="font-weight:bold;-webkit-text-stroke-width:0">tm_slots</b>，增加 <b style="font-weight:bold;-webkit-text-stroke-width:0">tm_num</b> 个数</div>
<div class="a" style="left:1142px;top:843px;font-size:13px;line-height:20px;color:#1d2129;font-weight:normal;width:716.5px;text-align:justify;text-align-last:justify"><span style="font-size:13px">📌</span><span style="-webkit-text-stroke-width:0.4px">建议</span>：当资源不足时，缩小单 TaskManager 的 slots 数量，增加 TaskManager 数量，可提升资源利用率，缓解 CPU 瓶颈</div>
<div class="a" style="left:1142px;top:864px;font-size:13px;line-height:20px;color:#1d2129;font-weight:normal;-webkit-text-stroke-width:0.4px;width:65.0px;text-align:justify;text-align-last:justify">操作步骤：</div>
<div class="a" style="left:1141px;top:883px;width:1318px;height:148px;border:1px solid #eceef2;border-radius:8px;background:#f7f8fa;overflow:hidden"><div style="height:36.5px;background:#f1f2f4"></div></div>
<svg class="a" style="left:1161px;top:897px" width="18" height="9" viewBox="0 0 18 9" fill="none" stroke="#6b7280" stroke-width="0.9"><path d="M2.5 0.5 L0.5 0.5 L0.5 8.5 L2.5 8.5 M15.5 0.5 L17.5 0.5 L17.5 8.5 L15.5 8.5"/><path d="M4.5 2.5 L7 4.5 L4.5 6.5 M8 7.8 L11 7.8"/></svg>
<div class="a" style="left:1185px;top:893px;font-size:12px;line-height:18px;color:#30343b;font-weight:normal;font-family:'Liberation Mono',monospace;width:64.9px;text-align:justify;text-align-last:justify">plaintext</div>
<svg class="a" style="left:2403px;top:897px" width="11" height="12" viewBox="0 0 11 12" fill="none" stroke="#6b7280" stroke-width="1"><rect x="0.5" y="3" width="7" height="8.5" rx="1"/><path d="M3 3 L3 1.5 Q3 0.5 4 0.5 L9.5 0.5 Q10.5 0.5 10.5 1.5 L10.5 8 Q10.5 9 9.5 9 L7.5 9"/></svg>
<svg class="a" style="left:2431px;top:897px" width="11" height="12" viewBox="0 0 11 12" fill="none" stroke="#6b7280" stroke-width="1"><path d="M6 0.5 Q10.5 3 10 7.5 Q8.5 11.5 4 11.5 Q1.5 11.5 0.5 9.5 Q5 9.5 6.5 6.5 Q7.8 3.5 6 0.5 Z"/></svg>
<div class="a" style="left:1158px;top:931.5px;font-size:11px;line-height:16px;color:#2b2f36;font-weight:normal;font-family:'Liberation Mono',monospace;width:13.3px;text-align:justify;text-align-last:justify">1.</div>
<div class="a" style="left:1178px;top:931.5px;font-size:11px;line-height:16px;color:#2b2f36;font-weight:normal;font-family:'Liberation Mono',monospace;width:121.1px;text-align:justify;text-align-last:justify">登录Flink集群配置平台</div>
<div class="a" style="left:1158px;top:948.1px;font-size:11px;line-height:16px;color:#2b2f36;font-weight:normal;font-family:'Liberation Mono',monospace;width:13.3px;text-align:justify;text-align-last:justify">2.</div>
<div class="a" style="left:1178px;top:948.1px;font-size:11px;line-height:16px;color:#2b2f36;font-weight:normal;font-family:'Liberation Mono',monospace;width:213.5px;text-align:justify;text-align-last:justify">找到对应任务的tm_slots和tm_num配置项</div>
<div class="a" style="left:1158px;top:964.7px;font-size:11px;line-height:16px;color:#2b2f36;font-weight:normal;font-family:'Liberation Mono',monospace;width:13.3px;text-align:justify;text-align-last:justify">3.</div>
<div class="a" style="left:1178px;top:964.7px;font-size:11px;line-height:16px;color:#2b2f36;font-weight:normal;font-family:'Liberation Mono',monospace;width:209.1px;text-align:justify;text-align-last:justify">缩小tm_slots（例如从原来的4缩小到2）</div>
<div class="a" style="left:1158px;top:981.3px;font-size:11px;line-height:16px;color:#2b2f36;font-weight:normal;font-family:'Liberation Mono',monospace;width:13.3px;text-align:justify;text-align-last:justify">4.</div>
<div class="a" style="left:1178px;top:981.3px;font-size:11px;line-height:16px;color:#2b2f36;font-weight:normal;font-family:'Liberation Mono',monospace;width:360.9px;text-align:justify;text-align-last:justify">增加tm_num（例如从原来的2增加到4，保持总slots数不变或适当增加）</div>
<div class="a" style="left:1158px;top:997.9px;font-size:11px;line-height:16px;color:#2b2f36;font-weight:normal;font-family:'Liberation Mono',monospace;width:13.3px;text-align:justify;text-align-last:justify">5.</div>
<div class="a" style="left:1178px;top:997.9px;font-size:11px;line-height:16px;color:#2b2f36;font-weight:normal;font-family:'Liberation Mono',monospace;width:151.9px;text-align:justify;text-align-last:justify">重启任务并观察CPU使用率变化</div>
<div class="a" style="left:2451px;top:1104px;width:46px;height:46px;border-radius:50%;background:#1664ff"></div>
<svg class="a" style="left:2466px;top:1121px" width="8" height="12" viewBox="0 0 8 12"><path d="M6.5 1 L1.5 6 L6.5 11" fill="none" stroke="#fff" stroke-width="2.2"/></svg>
</div>
</body></html>
